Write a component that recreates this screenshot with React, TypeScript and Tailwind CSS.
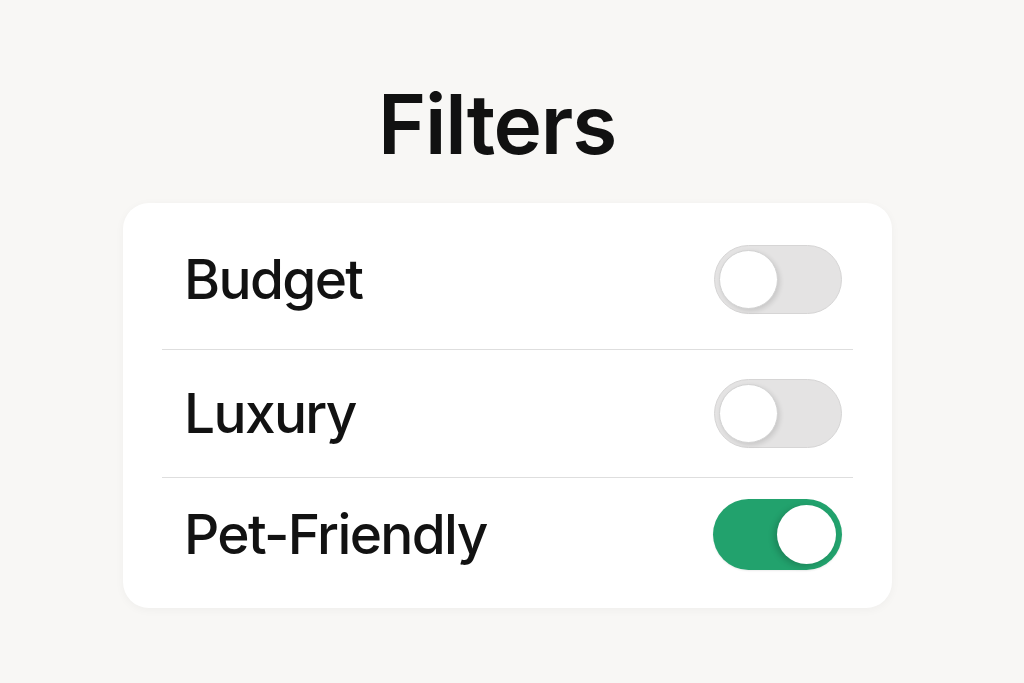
import React from "react";

function Toggle({ on }: { on: boolean }) {
  return on ? (
    <div className="relative h-[71px] w-[129px] rounded-full bg-[#22a26d] shadow-[0_1px_2px_rgba(0,0,0,0.08)]">
      <div className="absolute right-[6px] top-[6px] h-[59px] w-[59px] rounded-full bg-white shadow-[-3px_2px_6px_rgba(0,0,0,0.18)]" />
    </div>
  ) : (
    <div className="relative h-[69px] w-[128px] rounded-full border border-[#d6d5d5] bg-[#e4e3e3]">
      <div className="absolute left-[4px] top-[4px] h-[59px] w-[59px] rounded-full border border-[#d2d2d2] bg-white shadow-[2px_2px_5px_rgba(0,0,0,0.12)]" />
    </div>
  );
}

function Row({ label, on, h }: { label: string; on: boolean; h: string }) {
  return (
    <div className={`flex items-center justify-between pl-[22px] pr-[11px] ${h}`}>
      <span className="text-[55px] font-medium leading-none text-[#121212] tracking-[-0.03em]">{label}</span>
      <Toggle on={on} />
    </div>
  );
}

export default function App() {
  return (
    <div
      className="min-h-[683px] w-full bg-[#f8f7f5] pl-[123px] pt-[84px]"
      style={{ fontFamily: "Inter, 'Noto Sans', sans-serif" }}
    >
      <div className="w-[769px] pr-[21px] text-center text-[82px] font-semibold leading-none text-[#111] tracking-[-0.015em]">
        Filters
      </div>
      <div className="mt-[37px] w-[769px] rounded-[26px] bg-white px-[39px] pb-[18px] pt-[6px] shadow-[0_2px_10px_rgba(0,0,0,0.04)]">
        <Row label="Budget" on={false} h="h-[140px]" />
        <div className="h-px bg-[#dedede]" />
        <Row label="Luxury" on={false} h="h-[127px]" />
        <div className="h-px bg-[#dedede]" />
        <Row label="Pet-Friendly" on={true} h="h-[112px]" />
      </div>
    </div>
  );
}
